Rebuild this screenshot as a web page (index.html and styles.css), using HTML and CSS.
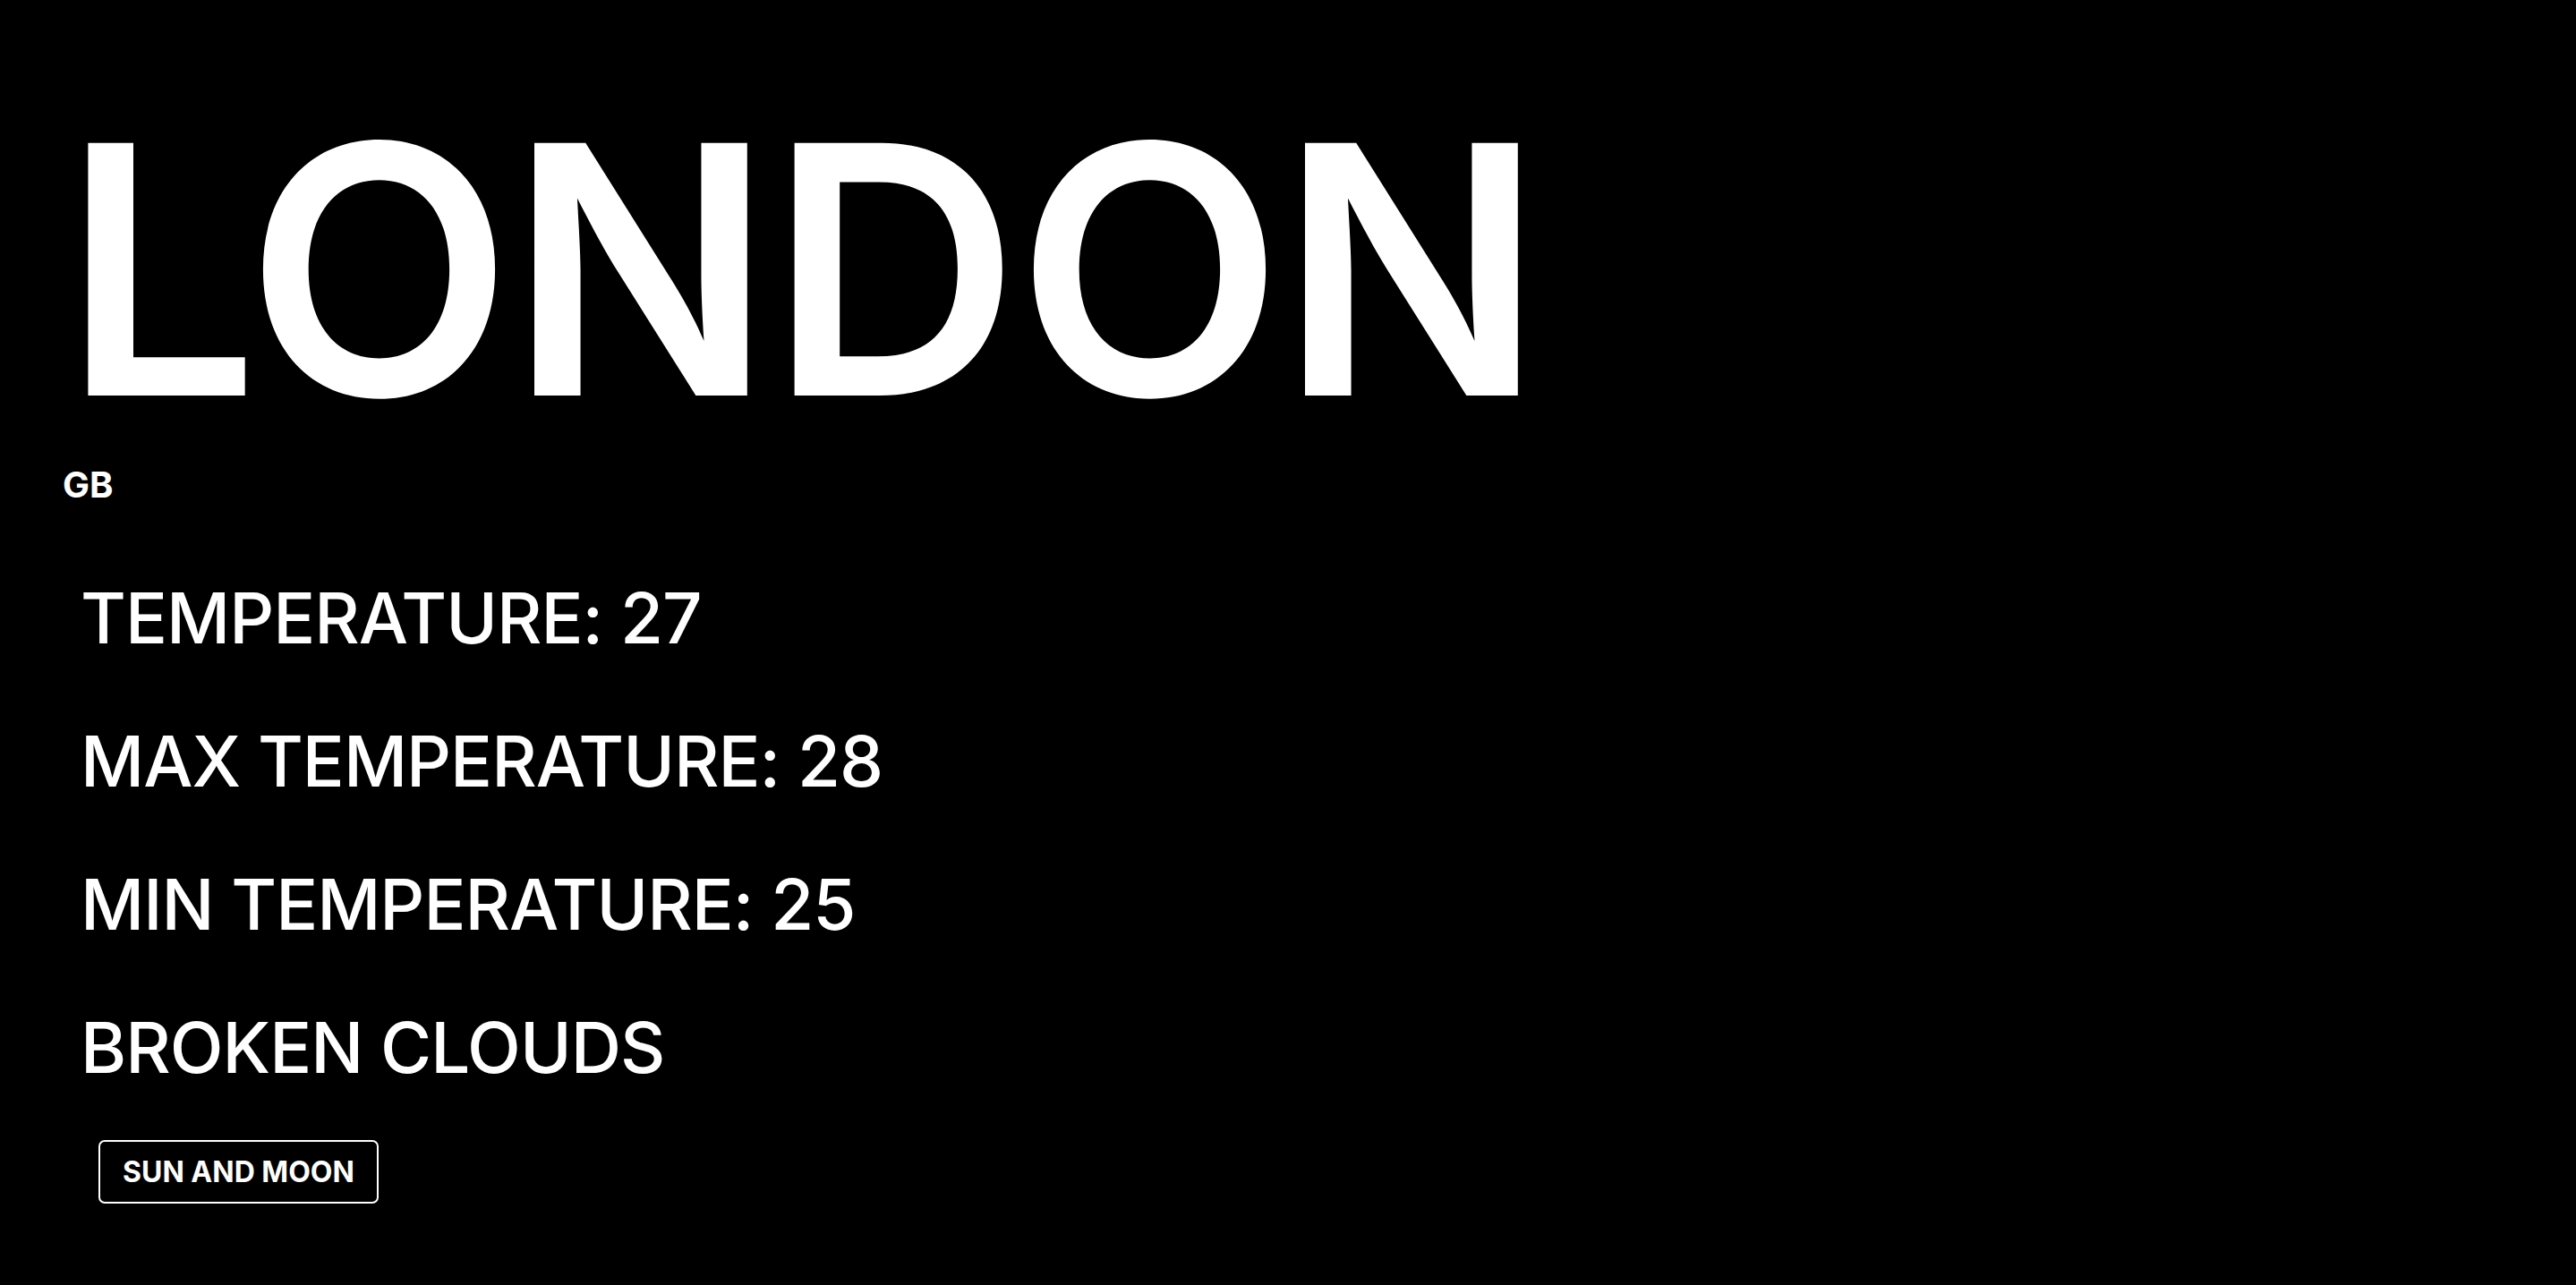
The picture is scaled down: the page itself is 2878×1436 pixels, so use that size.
FILE: index.html
```html
<!DOCTYPE html>
<html lang="en">
<head>
<meta charset="utf-8">
<title>London weather</title>
<link rel="stylesheet" href="styles.css">
</head>
<body>
<main class="page">
  <h1 class="city">LONDON</h1>
  <p class="country">GB</p>
  <section class="stats">
    <p class="stat">TEMPERATURE: 27</p>
    <p class="stat">MAX TEMPERATURE: 28</p>
    <p class="stat">MIN TEMPERATURE: 25</p>
    <p class="stat">BROKEN CLOUDS</p>
  </section>
  <button class="btn" type="button">SUN AND MOON</button>
</main>
</body>
</html>
```

FILE: styles.css
```css
html, body {
  margin: 0;
  padding: 0;
  background: #000;
  color: #fff;
  font-family: Inter, "Noto Sans", sans-serif;
}

.page {
  display: flex;
  flex-direction: column;
  align-items: flex-start;
  padding: 107px 0 0 70px;
  min-height: 1436px;
  box-sizing: border-box;
}

.city {
  margin: 0;
  font-size: 388px;
  font-weight: 600;
  line-height: 1;
  letter-spacing: -4px;
}

.country {
  margin: 27px 0 0 0;
  font-size: 40px;
  font-weight: 700;
  line-height: 1;
}

.stats {
  display: flex;
  flex-direction: column;
  gap: 82px;
  margin: 90px 0 0 20px;
}

.stat {
  margin: 0;
  font-size: 78px;
  font-weight: 550;
  line-height: 1;
  letter-spacing: -1px;
}

.btn {
  margin: 64px 0 0 40px;
  height: 71px;
  padding: 0 25px;
  background: #000;
  color: #fff;
  border: 2px solid #fff;
  border-radius: 7px;
  font-family: Inter, "Noto Sans", sans-serif;
  font-size: 32px;
  font-weight: 700;
  line-height: 1;
}
```
